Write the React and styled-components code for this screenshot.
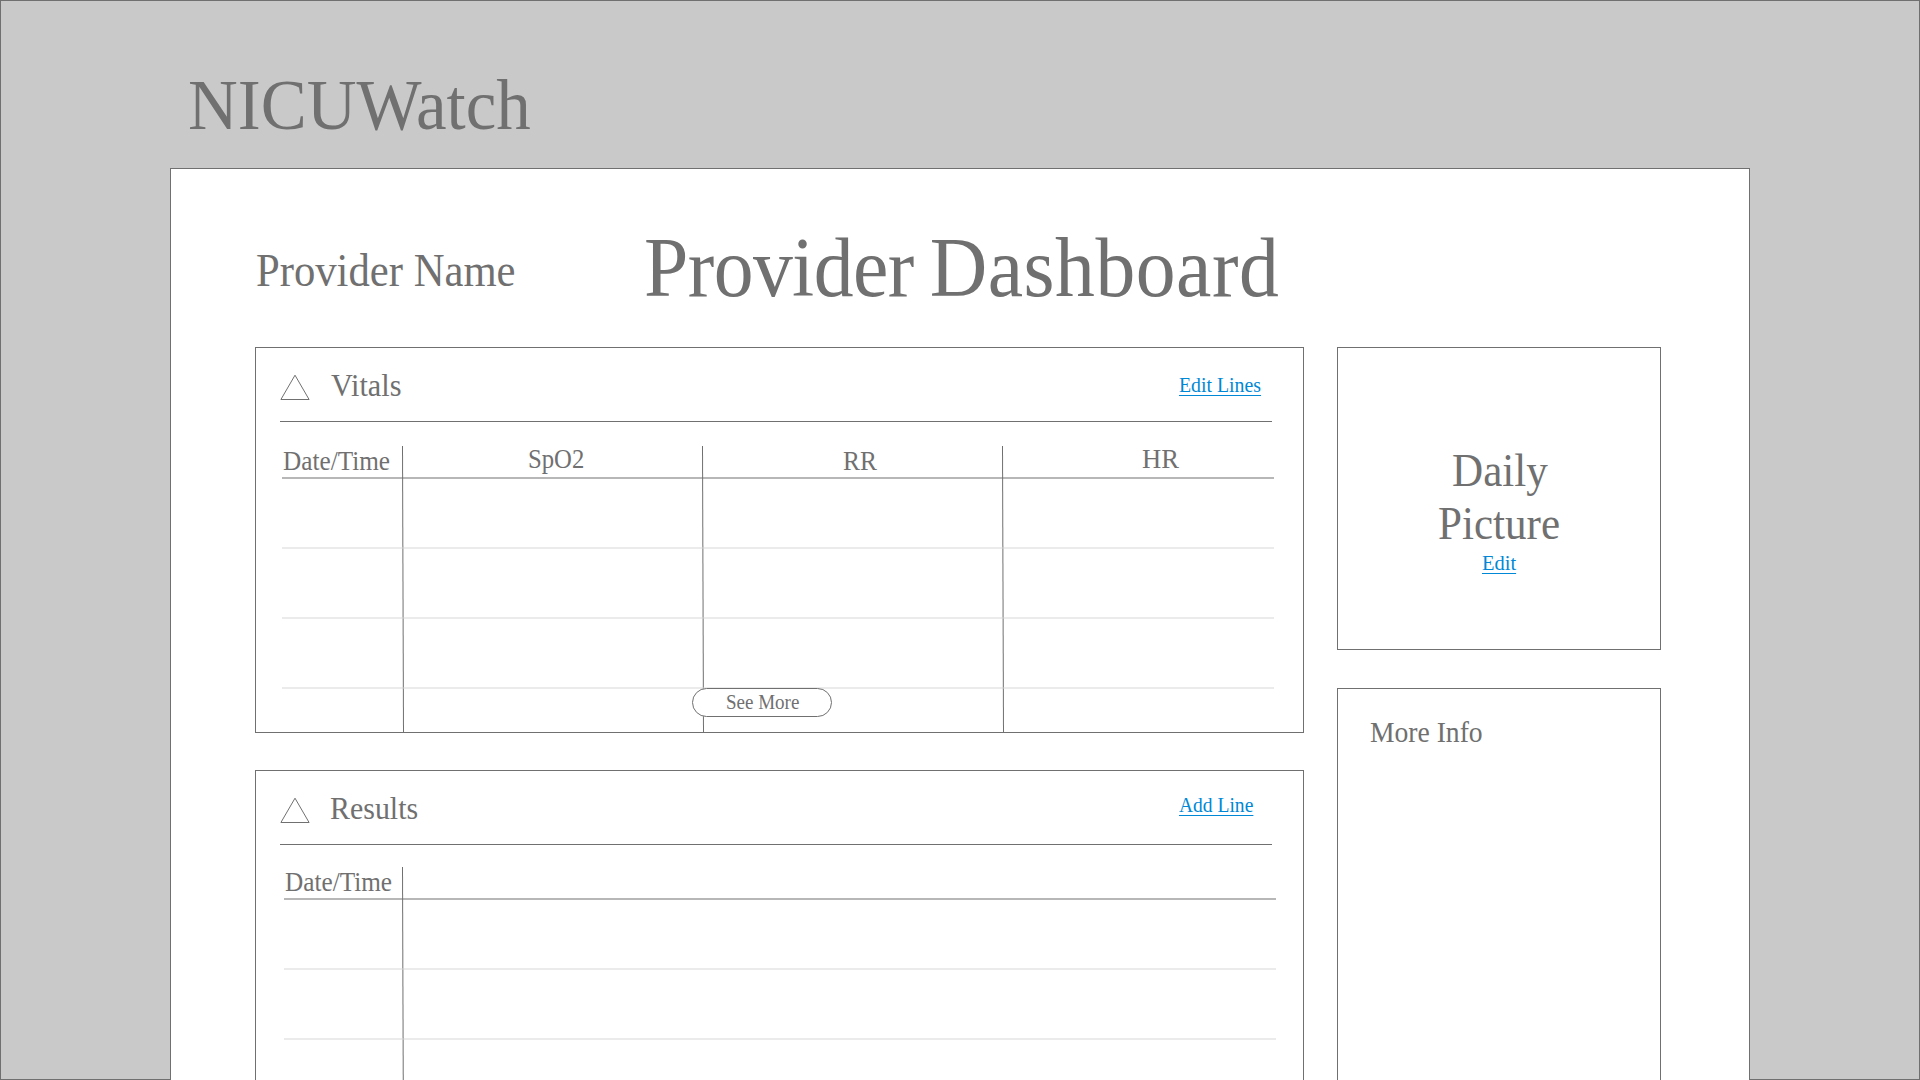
import React from "react";
import styled, { createGlobalStyle } from "styled-components";

const INK = "#707070";

const GlobalStyle = createGlobalStyle`
  html, body { margin: 0; padding: 0; overflow: hidden; }
  *, *::before, *::after { box-sizing: border-box; }
  body { font-family: "Liberation Serif", "Times New Roman", serif; color: ${INK}; }
`;

const Page = styled.div`
  width: 1920px;
  height: 1080px;
  background: #c9c9c9;
  border: 1px solid ${INK};
`;

const Label = styled.span`
  display: block;
  flex: none;
  width: max-content;
  font-size: ${(p) => p.$size}px;
  line-height: 1;
  white-space: nowrap;
  transform: scaleX(${(p) => p.$narrow});
  transform-origin: left top;
`;

const Heading = styled(Label)`
  margin: 0;
  font-weight: 400;
  word-spacing: -4px;
`;

const Word = styled.span`
  letter-spacing: ${(p) => p.$spacing}px;
`;

const Link = styled.a`
  display: block;
  flex: none;
  width: max-content;
  height: 21px;
  font-size: 21px;
  line-height: 21px;
  white-space: nowrap;
  color: #0088d6;
  border-bottom: 1px solid #0088d6;
  transform: scaleX(${(p) => p.$narrow});
  transform-origin: left top;
`;

const Brand = styled.header`
  height: 167px;
  padding: 68px 0 0 187px;
`;

const Sheet = styled.main`
  width: 1580px;
  height: 912px;
  margin-left: 169px;
  padding-left: 84px;
  background: #fff;
  border: 1px solid ${INK};
  border-bottom: none;
  overflow: hidden;
`;

const TitleRow = styled.div`
  display: grid;
  grid-template-columns: 388px 1fr;
  height: 178px;
`;

const TitleCell = styled.div`
  padding: ${(p) => p.$top}px 0 0 ${(p) => p.$left}px;
`;

const Content = styled.div`
  display: flex;
  gap: 33px;
`;

const Column = styled.div`
  display: flex;
  flex-direction: column;
  gap: ${(p) => p.$gap}px;
  width: ${(p) => p.$width}px;
`;

const Card = styled.section`
  height: ${(p) => p.$height}px;
  border: 1px solid ${INK};
`;

const CardHeader = styled.div`
  display: flex;
  height: 74px;
  width: 992px;
  margin-left: 24px;
  border-bottom: 1px solid ${INK};
`;

const Triangle = styled.svg`
  display: block;
  flex: none;
  width: 30px;
  height: 27px;
  margin-top: 26px;
  fill: none;
  stroke: ${INK};
`;

const HeaderTitle = styled.div`
  width: ${(p) => 869 - p.$indent}px;
  margin-left: ${(p) => p.$indent}px;
  padding-top: 21px;
`;

const HeaderAction = styled.div`
  padding-top: ${(p) => p.$top}px;
`;

const Table = styled.div`
  position: relative;
  width: 992px;
  margin-left: ${(p) => p.$indent}px;
`;

const HeadRow = styled.div`
  display: grid;
  grid-template-columns: ${(p) => p.$columns};
  height: ${(p) => p.$height}px;
  border-bottom: 2px solid #b7b7b7;
`;

const HeadCell = styled.div`
  padding: ${(p) => p.$top}px 0 0 ${(p) => p.$left}px;
`;

const Row = styled.div`
  position: relative;
  z-index: 1;
  height: 70px;
  border-bottom: 2px solid rgba(212, 212, 212, 0.46);
`;

const Separator = styled.div`
  position: absolute;
  left: ${(p) => p.$left}px;
  top: ${(p) => p.$top}px;
  width: 1px;
  height: 287px;
  background: ${INK};
  transform: rotate(-0.2deg);
  transform-origin: top center;
`;

const MoreButton = styled.button`
  position: absolute;
  z-index: 2;
  left: 410px;
  top: 266px;
  display: flex;
  align-items: flex-start;
  width: 140px;
  height: 29px;
  padding: 3px 0 0 33px;
  border: 1px solid ${INK};
  border-radius: 15px;
  background: #fff;
  color: ${INK};
  font-family: inherit;
`;

const Line = styled.div`
  height: ${(p) => p.$height}px;
  padding: ${(p) => p.$top || 0}px 0 0 ${(p) => p.$left}px;
`;

const TriangleIcon = () => (
  <Triangle viewBox="0 0 30 27">
    <path d="M15 1.2L29.1 25.5H0.9Z" />
  </Triangle>
);

const VITALS = [
  { name: "Date/Time", left: 1, top: 26, narrow: 0.935 },
  { name: "SpO2", left: 126, top: 24, narrow: 0.915 },
  { name: "RR", left: 141, top: 26, narrow: 0.94 },
  { name: "HR", left: 140, top: 24, narrow: 0.985 },
];

export default function App() {
  return (
    <>
      <GlobalStyle />
      <Page>
        <Brand>
          <Label $size={71.5} $narrow={0.964}>NICUWatch</Label>
        </Brand>
        <Sheet>
          <TitleRow>
            <TitleCell $top={78} $left={1}>
              <Label $size={47} $narrow={0.908}>Provider Name</Label>
            </TitleCell>
            <TitleCell $top={57} $left={1}>
              <Heading as="h1" $size={84.5} $narrow={0.942}>
                <Word $spacing={-0.6}>Provider</Word> <Word $spacing={0.55}>Dashboard</Word>
              </Heading>
            </TitleCell>
          </TitleRow>
          <Content>
            <Column $width={1049} $gap={37}>
              <Card $height={386}>
                <CardHeader>
                  <TriangleIcon />
                  <HeaderTitle $indent={21}>
                    <Label $size={32} $narrow={0.945}>Vitals</Label>
                  </HeaderTitle>
                  <HeaderAction $top={27}>
                    <Link $narrow={0.943}>Edit Lines</Link>
                  </HeaderAction>
                </CardHeader>
                <Table $indent={26}>
                  <HeadRow $columns="120px 300px 300px 1fr" $height={57}>
                    {VITALS.map((c) => (
                      <HeadCell key={c.name} $left={c.left} $top={c.top}>
                        <Label $size={27} $narrow={c.narrow}>{c.name}</Label>
                      </HeadCell>
                    ))}
                  </HeadRow>
                  <Row />
                  <Row />
                  <Row />
                  <Separator $left={120} $top={24} />
                  <Separator $left={420} $top={24} />
                  <Separator $left={720} $top={24} />
                  <MoreButton>
                    <Label $size={21} $narrow={0.905}>See More</Label>
                  </MoreButton>
                </Table>
              </Card>
              <Card $height={386}>
                <CardHeader>
                  <TriangleIcon />
                  <HeaderTitle $indent={20}>
                    <Label $size={32} $narrow={0.935}>Results</Label>
                  </HeaderTitle>
                  <HeaderAction $top={24}>
                    <Link $narrow={0.93}>Add Line</Link>
                  </HeaderAction>
                </CardHeader>
                <Table $indent={28}>
                  <HeadRow $columns="118px 1fr" $height={55}>
                    <HeadCell $left={1} $top={24}>
                      <Label $size={27} $narrow={0.935}>Date/Time</Label>
                    </HeadCell>
                  </HeadRow>
                  <Row />
                  <Row />
                  <Separator $left={118} $top={22} />
                </Table>
              </Card>
            </Column>
            <Column $width={324} $gap={38}>
              <Card $height={303}>
                <Line $left={114} $top={100} $height={153}>
                  <Label $size={46} $narrow={0.937}>Daily</Label>
                </Line>
                <Line $left={100} $height={51}>
                  <Label $size={46} $narrow={0.937}>Picture</Label>
                </Line>
                <Line $left={144} $top={1} $height={22}>
                  <Link $narrow={0.975}>Edit</Link>
                </Line>
              </Card>
              <Card $height={450}>
                <Line $left={32} $top={28} $height={60}>
                  <Label $size={30} $narrow={0.92}>More Info</Label>
                </Line>
              </Card>
            </Column>
          </Content>
        </Sheet>
      </Page>
    </>
  );
}
